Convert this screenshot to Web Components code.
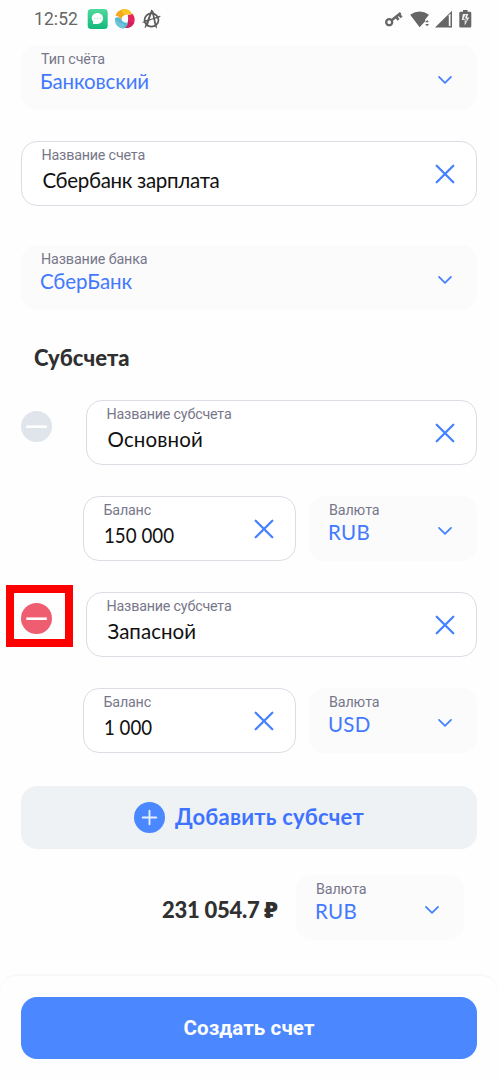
<!DOCTYPE html>
<html lang="ru">
<head>
<meta charset="utf-8">
<title>Создать счет</title>
<style>
html,body{margin:0;background:#fefefe}
body{width:498px;height:1080px;overflow:hidden;font-family:Roboto,"Liberation Sans",sans-serif}
</style>
</head>
<body>
<account-page></account-page>
<script>
const define = (name, html, setup) => {
  const t = document.createElement('template');
  t.innerHTML = html;
  customElements.define(name, class extends HTMLElement {
    connectedCallback() {
      if (this.shadowRoot) return;
      this.attachShadow({mode: 'open'}).append(t.content.cloneNode(true));
      if (setup) setup(this, this.shadowRoot);
    }
  });
};

/* One line of text fitted to the advance width given in "w": tracked, or condensed when it is a number. */
define('fit-text', `<style>:host{display:inline-block;white-space:pre}span{display:inline-block;transform-origin:0 50%}</style><span><slot></slot></span>`, (el, root) => {
  const s = root.querySelector('span'), w = +el.getAttribute('w');
  const n = el.textContent.length, natural = s.getBoundingClientRect().width;
  if (/^[\d ]+$/.test(el.textContent)) s.style.transform = `translateX(-1px) scaleX(${(w / natural).toFixed(4)})`;
  else s.style.letterSpacing = ((w - natural) / n).toFixed(3) + 'px';
});

define('icon-chevron', `<style>:host{display:block;width:16px;height:10px}svg{display:block}</style>
<svg width="16" height="10" viewBox="0 0 16 10"><path d="M2 1.9 8 7.9 14 1.9" fill="none" stroke="#4582ff" stroke-width="1.8" stroke-linecap="round" stroke-linejoin="round"/></svg>`);

define('icon-clear', `<style>:host{display:block;width:22px;height:22px}svg{display:block}</style>
<svg width="22" height="22" viewBox="0 0 22 22"><path d="M2.700 2.700 19.300 19.300M19.300 2.700 2.700 19.300" fill="none" stroke="#4582ff" stroke-width="2.300" stroke-linecap="round"/></svg>`);

define('round-icon', `<style>:host{display:block;width:31px;height:31px;color:#dfe5eb}svg{display:block}</style>
<svg width="31" height="31" viewBox="0 0 31 31"><circle cx="15.5" cy="15.5" r="15.5" fill="currentColor"/><path id="g" fill="none" stroke-linecap="round"/></svg>`, (el, root) => {
  const g = root.getElementById('g'), plus = el.hasAttribute('plus');
  g.setAttribute('d', plus ? 'M8.7 15.5H22.3M15.5 8.7V22.3' : 'M5.3 15.7H25.8');
  g.setAttribute('stroke', plus ? '#e6effa' : '#fff');
  g.setAttribute('stroke-width', plus ? 1.9 : 2.6);
  if (!plus) g.setAttribute('stroke-linecap', 'butt');
});

define('status-bar', `<style>
:host{display:flex;height:45px;box-sizing:border-box;padding:8px 26px 0 34px;justify-content:space-between;color:#666}
div{display:flex;height:22px;align-items:center}
.t{font-size:17.500px;line-height:22px;margin-right:9px}
svg{display:block;flex:none}
</style>
<div><fit-text class="t" w="44">12:52</fit-text>
<svg width="22" height="22" viewBox="0 0 22 22"><defs><linearGradient id="a" x2="0" y2="1"><stop stop-color="#4fdb9c"/><stop offset="1" stop-color="#12b87d"/></linearGradient></defs><rect x=".7" y=".9" width="20" height="20" rx="3.5" fill="url(#a)"/><path d="M10.4 5c3.300 0 5.700 2.400 5.700 5.300s-2.400 5.600-5.700 5.600H6l.2-2.200A5.300 5.300 0 0 1 4.700 10.300C4.700 7.400 7.100 5 10.400 5z" fill="#fff"/><g fill="#aee6cf"><circle cx="7.700" cy="10.500" r=".8"/><circle cx="10.500" cy="10.500" r=".8"/><circle cx="13.300" cy="10.500" r=".8"/></g></svg>
<svg style="margin-left:5px" width="22" height="22" viewBox="-11 -11 22 22">
<path d="M-9.500-3.500C-8-8-4-10.300.5-9.800 4.500-9.300 7.200-6.500 7-3 4.500-4.800 1-4.800-1.500-3.300-3-2.300-3.400-1-3.400 1-5.500-2-7.500-3.200-9.500-3.500z" fill="#f6a81c"/>
<path d="M-3.500-9Q-1.500-10 .5-9.800C4.500-9.300 7.200-6.500 7-3 4-5.500 1-5.500-1.500-4.200z" fill="#f9c623"/>
<path d="M7-5.500C10.200-2.800 10.800 3 7.500 6.500 5 9.200 1.500 9.500-1.500 8 2.500 6.500 3.800 3 2.800-4 5.500-4 6.500-4.500 7-5.500z" fill="#e5265d"/>
<path d="M9.300 3.500C7 8.500 2.500 10-1.500 8 1.700 6.500 3.300 4.500 3.300 1Q6.500 3 9.300 3.500z" fill="#d02062"/>
<path d="M-9.900-1C-8-2.500-5.500-2-3.800 0-2.800 2.800-.5 4.200 3 3.800 2.500 7.500 0 10-3.500 9.200-8.500 7.500-10.500 3.500-9.900-1z" fill="#58b8d1"/>
<path d="M-9.900-1Q-7 4.500-.5 5L-1 9.400C-7 9.500-10.700 4.500-9.900-1z" fill="#6fc4d9"/></svg>
<svg style="margin-left:5px" width="22" height="22" viewBox="0 0 22 22" fill="none" stroke="#5b5b5b" stroke-linecap="round"><ellipse cx="10.500" cy="12" rx="7" ry="6.700" stroke-width="1.700"/><path d="M4.200 19.300 10.600 2.400 11.900 3.500 15.400 19.600M10.700 3 6 18M11.500 4 14.500 18" stroke-width="1.200"/><path d="M2 14.300 19 8.300M3.500 13 18 9.200" stroke-width="1.100"/></svg></div>
<div>
<svg width="20" height="18" viewBox="0 0 20 18" fill="none" stroke="#666"><circle cx="5.200" cy="12.200" r="3" stroke-width="2.300"/><path d="M7.600 10.200 16.700 3M12 6.700l2.600 3.200M14.800 4.300l2.800 3.100" stroke-width="2.500"/></svg>
<svg style="margin-left:6px" width="20" height="18" viewBox="0 0 20 18" fill="#666"><path d="M.2 4.800Q9.600-1.800 19 4.800L15.200 9.400V11.200L9.600 17.200z"/><path d="M15.200 12.300 17.100 10l1.900 2.300zM15.200 14l1.900 2.300L19 14z"/></svg>
<svg style="margin-left:5px" width="18" height="18" viewBox="0 0 18 18"><path d="M0 17.500 17 .7V17.500z" fill="#666"/><path d="M13.800 5.200 15.500 3.500V16H13.800z" fill="#fff"/></svg>
<svg style="margin-left:6px" width="13" height="18" viewBox="0 0 13 18"><path d="M4 0h4.600v1.700H11q1.300 0 1.300 1.300v13.200q0 1.300-1.300 1.300H1.600Q.3 17.500.3 16.200V3q0-1.300 1.300-1.300H4z" fill="#666"/><path d="M3.800 4h5.500L8 7.500h2.200L5.700 15.500V10H2.900z" fill="#eee"/><path d="M6.700 5.200 5 8.800h2v2.600" fill="none" stroke="#666"/></svg>
</div>`);

define('form-field', `<style>
:host{display:flex;box-sizing:border-box;height:65px;border-radius:16px;padding:0 24px 0 20px;justify-content:space-between;align-items:center;background:#fbfbfb;color:#4379ff;--vt:1px;--vl:-1px}
:host([input]){background:#fff;border:1.500px solid #dadde4;padding:0 20px 0 19.500px;color:#111;--vt:4px;--vl:1px}
.c{align-self:flex-start;display:flex;flex-direction:column;align-items:flex-start;padding-top:5px}
:host([input]) .c{padding-top:4px}
.l{font-size:14.300px;line-height:18px;color:#77778a}
.v{font:400 20.500px/24px Lato,"Noto Sans",sans-serif;margin:var(--vt) 0 0 var(--vl)}
icon-chevron{margin-top:5px}
:host([input]) icon-chevron,:host(:not([input])) icon-clear{display:none}
</style><div class="c"><fit-text class="l"></fit-text><fit-text class="v"></fit-text></div><icon-chevron></icon-chevron><icon-clear></icon-clear>`, (el, root) => {
  for (const [c, a] of [['.l', 'label'], ['.v', 'value']]) {
    const old = root.querySelector(c), f = document.createElement('fit-text');
    f.className = old.className;
    f.setAttribute('w', el.getAttribute(a + '-w'));
    f.textContent = el.getAttribute(a);
    old.replaceWith(f);
  }
});

define('sub-account', `<style>
:host{display:block}
.top{display:grid;grid-template-columns:65px 391px;padding-left:21px}
.bot{display:grid;grid-template-columns:213px 168px;gap:13px;margin:31px 0 0 83px}
.m{position:relative;padding-top:11px}
:host([marked]) round-icon{color:#ef5d70}
.f{display:none;position:absolute;left:-15px;top:-7px;width:67px;height:62px;box-sizing:border-box;border:8px solid #f00}
:host([marked]) .f{display:block}
</style><div class="top"><div class="m"><round-icon></round-icon><i class="f"></i></div><slot name="name"></slot></div><div class="bot"><slot></slot></div>`);

define('add-button', `<style>:host{display:flex;height:63px;border-radius:16px;background:#eef2f5;margin:0 21px;align-items:center;justify-content:center;gap:10px;color:#3f73ff}
fit-text{font:700 22px/28px Lato,"Noto Sans",sans-serif;margin-top:-2px}
round-icon{color:#4b88ff}</style><round-icon plus></round-icon><fit-text w="189">Добавить субсчет</fit-text>`);

define('page-footer', `<style>:host{display:block;box-sizing:border-box;height:105px;border-top:1px solid #f7f7f8;border-radius:17px 17px 0 0;padding:20.600px 21px 0;background:#fefefe;box-shadow:0 -1px 1px #fafafa}
div{display:flex;height:62.400px;border-radius:16px;background:#4b88ff;color:#fff;align-items:center;justify-content:center;font:700 20.500px/24px Roboto,sans-serif}</style><div><slot></slot></div>`);

define('account-page', `<style>
:host{display:block;height:1080px}
.w{margin:0 21px}
h2{font:900 22px/28px Lato,"Noto Sans",sans-serif;color:#303030;margin:34px 0 28px 34px}
.sum{display:grid;grid-template-columns:116px 168px;gap:18px;margin:26px 34px 35px 162px;align-items:center}
.sum fit-text{font:900 22px/28px Lato,"Noto Sans",sans-serif;color:#303030;margin-top:4px}
</style>
<status-bar></status-bar>
<form-field class="w" label="Тип счёта" label-w="64" value="Банковский" value-w="109"></form-field>
<form-field class="w" style="margin-top:31px" input label="Название счета" label-w="103.500" value="Сбербанк зарплата" value-w="177"></form-field>
<form-field class="w" style="margin-top:39px" label="Название банка" label-w="106.500" value="СберБанк" value-w="92"></form-field>
<h2><fit-text w="95.500">Субсчета</fit-text></h2>
<sub-account>
<form-field slot="name" input label="Название субсчета" label-w="125" value="Основной" value-w="95.500"></form-field>
<form-field input label="Баланс" label-w="47.500" value="150 000" value-w="70"></form-field>
<form-field label="Валюта" label-w="50.500" value="RUB" value-w="42"></form-field>
</sub-account>
<sub-account marked style="margin-top:31px">
<form-field slot="name" input label="Название субсчета" label-w="125" value="Запасной" value-w="88.500"></form-field>
<form-field input label="Баланс" label-w="47.500" value="1 000" value-w="48"></form-field>
<form-field label="Валюта" label-w="50.500" value="USD" value-w="42.500"></form-field>
</sub-account>
<add-button style="margin-top:33px"></add-button>
<div class="sum"><fit-text w="116">231 054.7 ₽</fit-text><form-field label="Валюта" label-w="50.500" value="RUB" value-w="42"></form-field></div>
<page-footer><fit-text w="131">Создать счет</fit-text></page-footer>`);
</script>
</body>
</html>
